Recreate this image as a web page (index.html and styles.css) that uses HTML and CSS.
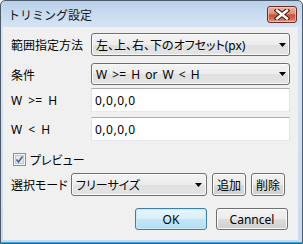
FILE: index.html
```html
<!DOCTYPE html>
<html lang="ja">
<head>
    <meta charset="UTF-8">
    <title>トリミング設定</title>
    <link rel="stylesheet" href="styles.css">
</head>
<body>

<div class="window">
    <div class="titlebar">
        <span class="title">トリミング設定</span>
        <span class="close-btn">
            <svg width="16" height="11" viewBox="0 0 16 11">
                <path d="M3 1.5 L13 9.5 M13 1.5 L3 9.5" stroke="#4a1f18" stroke-width="4.6" stroke-linecap="square"/>
                <path d="M3 1.5 L13 9.5 M13 1.5 L3 9.5" stroke="#ffffff" stroke-width="2.4" stroke-linecap="square"/>
            </svg>
        </span>
    </div>

    <div class="client">
        <div class="row row-range">
            <span class="label">範囲指定方法</span>
            <div class="combo">
                <span class="combo-text">左、上、右、下のオフセット(px)</span>
                <svg class="arrow" width="7" height="4" viewBox="0 0 7 4"><polygon points="0,0 7,0 3.5,4" fill="#000"/></svg>
            </div>
        </div>

        <div class="row row-cond">
            <span class="label">条件</span>
            <div class="combo">
                <span class="combo-text spaced">W &gt;= H or W &lt; H</span>
                <svg class="arrow" width="7" height="4" viewBox="0 0 7 4"><polygon points="0,0 7,0 3.5,4" fill="#000"/></svg>
            </div>
        </div>

        <div class="row row-ge">
            <span class="label spaced">W &gt;= H</span>
            <input class="field" type="text" value="0,0,0,0">
        </div>

        <div class="row row-lt">
            <span class="label spaced">W &lt; H</span>
            <input class="field" type="text" value="0,0,0,0">
        </div>

        <div class="row row-check">
            <span class="checkbox">
                <svg width="13" height="13" viewBox="0 0 13 13">
                    <rect x="0.5" y="0.5" width="12" height="12" fill="#f4f4f4" stroke="#8e8f8f"/>
                    <rect x="2.5" y="2.5" width="8" height="8" fill="#e6e6e6" stroke="#c8c8c8"/>
                    <path d="M3.5 6.5 L5.5 9 L9.5 3.5" fill="none" stroke="#4a5f97" stroke-width="1.6"/>
                </svg>
            </span>
            <span class="check-label">プレビュー</span>
        </div>

        <div class="row row-mode">
            <span class="label label-mode">選択モード</span>
            <div class="combo combo-mode">
                <span class="combo-text">フリーサイズ</span>
                <svg class="arrow" width="7" height="4" viewBox="0 0 7 4"><polygon points="0,0 7,0 3.5,4" fill="#000"/></svg>
            </div>
            <button class="btn btn-small">追加</button>
            <button class="btn btn-small">削除</button>
        </div>

        <div class="row row-actions">
            <button class="btn btn-action btn-default">OK</button>
            <button class="btn btn-action">Canncel</button>
        </div>
    </div>
</div>

</body>
</html>
```

FILE: styles.css
```css
body {
    margin: 0;
    font-family: "Noto Sans", "Noto Sans CJK JP", sans-serif;
    font-size: 12px;
    color: #000;
}
.window {
    width: 303px;
    height: 244px;
    box-sizing: border-box;
    border: 1px solid #4d5a69;
    border-radius: 5px 5px 0 0;
    background: linear-gradient(#b8d0ea 0px, #cadcf1 14px, #d6e4f4 27px, #c8daef 100%);
    box-shadow: inset 0 -1px 0 #3aa6dc;
    padding: 0 4px 3px 2px;
    display: flex;
    flex-direction: column;
}
.titlebar {
    height: 26px;
    display: flex;
    align-items: center;
    justify-content: space-between;
    padding-left: 5px;
}
.title {
    font-family: "Noto Sans CJK JP", sans-serif;
    font-size: 12px;
    color: #101820;
}
.close-btn {
    width: 30px;
    height: 17px;
    box-sizing: border-box;
    margin-right: 1px;
    margin-top: 1px;
    border: 1px solid #6e2a20;
    border-radius: 3px;
    background: linear-gradient(#eab2a2 0%, #dc8e78 45%, #c7513a 52%, #cf6a50 78%, #e2a088 100%);
    box-shadow: inset 0 0 0 1px rgba(255, 220, 210, 0.55);
    display: flex;
    align-items: center;
    justify-content: center;
}
.client {
    flex: 1;
    background: #f0f0f0;
    padding: 0 8px;
    display: flex;
    flex-direction: column;
    font-feature-settings: "palt";
}
.row {
    display: flex;
    align-items: center;
}
.label {
    width: 80px;
    flex: none;
    font-family: "Noto Sans CJK JP", sans-serif;
}
.spaced {
    font-family: "Noto Sans", sans-serif;
    word-spacing: 3px;
}
.combo {
    flex: 1;
    height: 23px;
    box-sizing: border-box;
    border: 1px solid #707070;
    border-radius: 3px;
    background: linear-gradient(#f4f4f4 0%, #ececec 50%, #e0e0e0 51%, #e4e4e4 100%);
    box-shadow: inset 0 0 0 1px #fafafa;
    display: flex;
    align-items: center;
    justify-content: space-between;
    padding: 0 3px 0 4px;
}
.combo-text {
    font-family: "Noto Sans", "Noto Sans CJK JP", sans-serif;
    white-space: nowrap;
}
.combo-text.spaced {
    word-spacing: 2px;
}
.arrow {
    flex: none;
}
.row-range {
    margin-top: 6px;
}
.row-cond {
    margin-top: 7px;
}
.row-cond .combo {
    height: 22px;
}
.row-ge {
    margin-top: 3px;
}
.row-lt {
    margin-top: 5px;
}
.field {
    flex: 1;
    height: 24px;
    box-sizing: border-box;
    margin: 0;
    border: 1px solid #e2e3ea;
    border-top-color: #abadb3;
    border-bottom-color: #e3e9ef;
    background: #fff;
    padding: 0 3px;
    font-family: "Noto Sans", sans-serif;
    font-size: 12px;
    letter-spacing: 0.5px;
    color: #000;
    outline: none;
}
.row-check {
    margin-top: 10px;
    height: 16px;
    padding-left: 2px;
}
.checkbox {
    width: 13px;
    height: 13px;
    display: flex;
}
.check-label {
    margin-left: 4px;
    font-family: "Noto Sans CJK JP", sans-serif;
}
.row-mode {
    margin-top: 6px;
}
.label-mode {
    width: 60px;
}
.combo-mode {
    flex: none;
    width: 136px;
    margin-right: 5px;
    padding-right: 4px;
}
.btn {
    box-sizing: border-box;
    margin: 0;
    border: 1px solid #707070;
    border-radius: 3px;
    background: linear-gradient(#f2f2f2 0%, #ebebeb 50%, #dddddd 51%, #cfcfcf 100%);
    box-shadow: inset 0 0 0 1px #fbfbfb;
    font-family: "Noto Sans", "Noto Sans CJK JP", sans-serif;
    font-size: 12px;
    color: #000;
    padding: 0;
}
.btn-small {
    width: 35px;
    height: 23px;
    margin-right: 5px;
}
.row-actions {
    margin-top: 12px;
    justify-content: flex-end;
    padding-right: 2px;
}
.btn-action {
    width: 72px;
    height: 22px;
    margin-left: 9px;
}
.btn-default {
    border-color: #3c7fb1;
    background: linear-gradient(#e8f5fc 0%, #d8effb 50%, #c4e5f7 51%, #b6ddf3 100%);
    box-shadow: inset 0 0 0 1px #c9e8f9;
}
```
